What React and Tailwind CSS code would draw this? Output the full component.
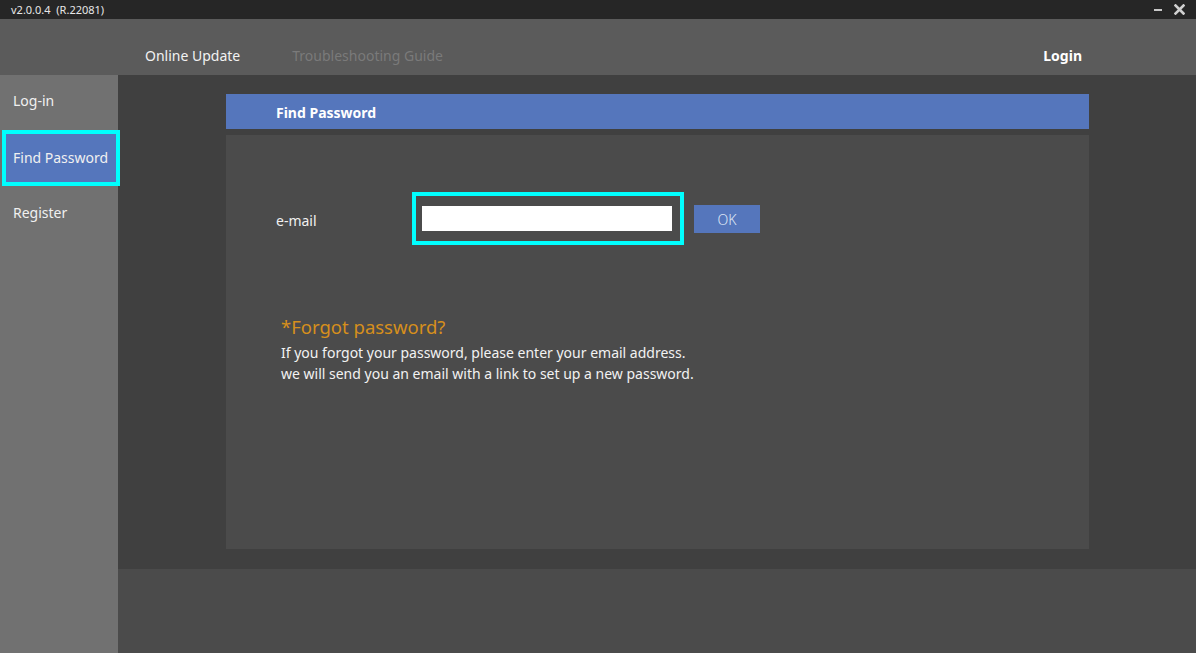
export default function App() {
  const sideItems = ['Log-in', 'Find Password', 'Register'];
  const active = 'Find Password';

  return (
    <div className="w-[1196px] h-[653px] flex flex-col overflow-hidden font-['Noto_Sans','Open_Sans',sans-serif] text-[#eeeeee]">
      {/* title bar */}
      <div className="h-[19px] shrink-0 bg-[#262626] flex items-center justify-between pl-[11px] pr-[11px]">
        <span className="text-[11px] leading-none text-[#e6e6e6] whitespace-pre">v2.0.0.4  (R.22081)</span>
        <div className="flex items-center gap-[12px]">
          <div className="w-[8px] h-[2px] bg-[#c8c8c8] mt-[1px]" />
          <svg width="11" height="11" viewBox="0 0 11 11">
            <path d="M1.5 1.5 L9.5 9.5 M9.5 1.5 L1.5 9.5" stroke="#d0d0d0" strokeWidth="2.6" strokeLinecap="square" />
          </svg>
        </div>
      </div>

      {/* header nav */}
      <div className="h-[56px] shrink-0 bg-[#5b5b5b] flex items-center pt-[16px] pl-[145px] pr-[114px] text-[14px]">
        <span className="text-[#f2f2f2]">Online Update</span>
        <span className="ml-[52px] text-[#7a7a7a]">Troubleshooting Guide</span>
        <span className="ml-auto font-bold text-white">Login</span>
      </div>

      <div className="flex flex-1 min-h-0">
        {/* sidebar */}
        <div className="w-[118px] shrink-0 bg-[#717171] flex flex-col">
          {sideItems.map((item, i) =>
            item === active ? (
              <div
                key={item}
                className="relative z-10 ml-[2px] w-[118px] h-[56px] border-4 border-[#00ffff] bg-[#5576bc] flex items-center pl-[7px] pb-[2px] text-[14px] text-[#f0f0f0]"
              >
                {item}
              </div>
            ) : (
              <div
                key={item}
                className={`${i === 0 ? 'h-[55px]' : 'h-[56px]'} flex items-center pl-[13px] pb-[4px] text-[14px] text-[#f0f0f0]`}
              >
                {item}
              </div>
            )
          )}
        </div>

        {/* main */}
        <div className="flex-1 flex flex-col">
          <div className="h-[494px] shrink-0 bg-[#404040] pt-[19px] pl-[108px]">
            <div className="w-[863px]">
              <div className="h-[35px] bg-[#5576bc] flex items-center pl-[50px] pt-[1px] text-[14px] font-bold text-white">
                Find Password
              </div>
              <div className="mt-[6px] h-[414px] bg-[#4b4b4b] pt-[57px] pl-[50px]">
                <div className="flex items-center">
                  <span className="w-[136px] pt-[3px] text-[14px] text-[#f0f0f0]">e-mail</span>
                  <div className="w-[272px] h-[53px] border-4 border-[#00ffff] flex items-center pl-[6px]">
                    <input className="w-[250px] h-[25px] bg-white outline-none border-0" />
                  </div>
                  <button className="ml-[10px] w-[66px] h-[28px] pt-[2px] bg-[#5576bc] text-[14px] font-light text-[#dfe6f5]">
                    OK
                  </button>
                </div>

                <div className="mt-[70px] pl-[5px]">
                  <div className="text-[18.5px] leading-[24px] text-[#d68f1c]">*Forgot password?</div>
                  <p className="mt-[3px] text-[14px] leading-[21px] text-[#f2f2f2]">
                    If you forgot your password, please enter your email address.
                    <br />
                    we will send you an email with a link to set up a new password.
                  </p>
                </div>
              </div>
            </div>
          </div>
          <div className="flex-1 bg-[#4b4b4b]" />
        </div>
      </div>
    </div>
  );
}
